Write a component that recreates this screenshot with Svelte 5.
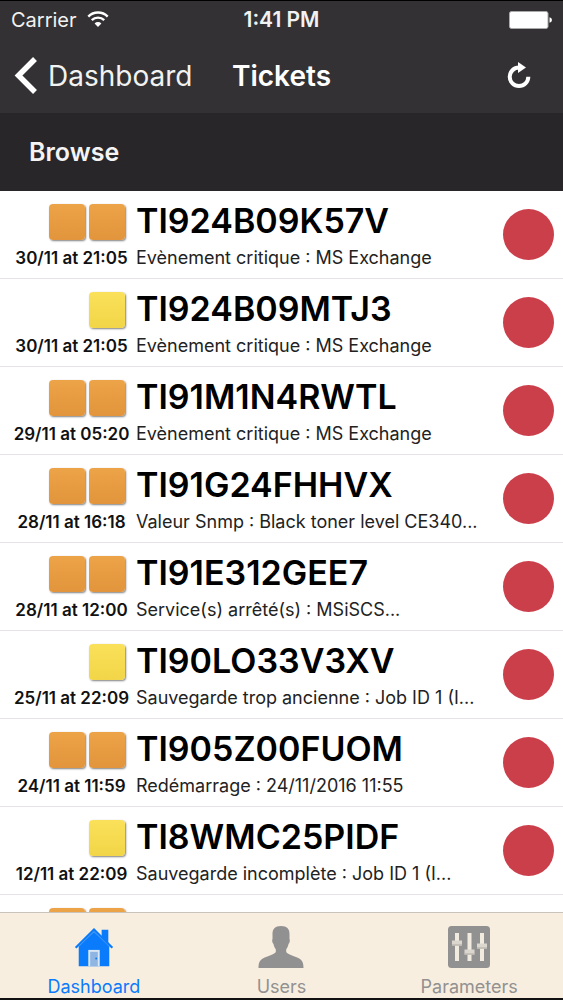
<script>
  const tickets = [
    { id: 'TI924B09K57V', date: '30/11 at 21:05', text: 'Evènement critique : MS Exchange', level: 2 },
    { id: 'TI924B09MTJ3', date: '30/11 at 21:05', text: 'Evènement critique : MS Exchange', level: 1 },
    { id: 'TI91M1N4RWTL', date: '29/11 at 05:20', text: 'Evènement critique : MS Exchange', level: 2 },
    { id: 'TI91G24FHHVX', date: '28/11 at 16:18', text: 'Valeur Snmp : Black toner level CE340...', level: 2 },
    { id: 'TI91E312GEE7', date: '28/11 at 12:00', text: 'Service(s) arrêté(s) : MSiSCS...', level: 2 },
    { id: 'TI90LO33V3XV', date: '25/11 at 22:09', text: 'Sauvegarde trop ancienne : Job ID 1 (I...', level: 1 },
    { id: 'TI905Z00FUOM', date: '24/11 at 11:59', text: 'Redémarrage : 24/11/2016 11:55', level: 2 },
    { id: 'TI8WMC25PIDF', date: '12/11 at 22:09', text: 'Sauvegarde incomplète : Job ID 1 (I...', level: 1 },
    { id: 'TI80IOS4VVRO', date: '', text: '', level: 2 }
  ]

  let tab = $state('Dashboard')
</script>

<div class="screen">
  <div class="status">
    <div class="carrier">
      <span>Carrier</span>
      <svg width="22" height="17" viewBox="0 0 22 17" fill="none" stroke="#fff" stroke-width="2.4">
        <path d="M1.3 5.6a13.6 13.6 0 0 1 19.4 0" />
        <path d="M4.8 9.2a8.7 8.7 0 0 1 12.4 0" />
        <path d="M11 16l-3.4-3.5a4.8 4.8 0 0 1 6.8 0z" fill="#fff" stroke="none" />
      </svg>
    </div>
    <span class="time">1:41 PM</span>
    <svg class="battery" width="43" height="18" viewBox="0 0 43 18" fill="#fff">
      <rect x="0.5" y="0.5" width="38.5" height="17" rx="2" stroke="#aaa" />
      <path d="M40.500 6.200c1.600.4 2.400 1.500 2.400 2.800s-.8 2.400-2.400 2.800z" />
    </svg>
  </div>

  <header>
    <a class="back" href="#dashboard">
      <svg width="24" height="37" viewBox="0 0 24 37" fill="none" stroke="#fff" stroke-width="5.5">
        <path d="M21 2L4.500 18.500 21 35" />
      </svg>
      Dashboard
    </a>
    <h1>Tickets</h1>
    <button class="refresh" aria-label="Refresh">
      <svg width="24" height="27" viewBox="0 0 24 27">
        <path d="M12 5.500a9.300 9.300 0 1 0 9.300 9.300" fill="none" stroke="#fff" stroke-width="4" />
        <path d="M11 0l8 5.500-8 5.500z" fill="#fff" />
      </svg>
    </button>
  </header>

  <h2>Browse</h2>

  <ul>
    {#each tickets as ticket}
      <li>
        <div class="meta">
          <div class="levels">
            {#each Array(ticket.level) as _}
              <span class="level" class:high={ticket.level > 1}></span>
            {/each}
          </div>
          <span class="date">{ticket.date}</span>
        </div>
        <div class="info">
          <h3>{ticket.id}</h3>
          <p>{ticket.text}</p>
        </div>
        <span class="dot"></span>
      </li>
    {/each}
  </ul>

  <nav>
    <button class:active={tab === 'Dashboard'} onclick={() => { tab = 'Dashboard' }}>
      <svg width="42" height="44" viewBox="0 0 44 44" fill="currentColor">
        <path d="M30 12V3h7v17z" />
        <path d="M22 1L2 21l1.500 1.500L22 5l18.500 17.500L42 21z" />
        <path d="M22 5L6 20v21h32V20z" />
        <path d="M5 21.500L22 4.500l17 17" fill="none" stroke="#5fa8f8" stroke-width="0.6" />
        <path d="M16 24h12v17H16z" fill="#d9e7f3" />
        <path d="M18 26h8v15h-8z" fill="#8fb5e2" />
        <circle cx="24.300" cy="33" r="1" />
      </svg>
      Dashboard
    </button>
    <button class:active={tab === 'Users'} onclick={() => { tab = 'Users' }}>
      <svg width="46" height="44" viewBox="0 0 46 44" fill="currentColor">
        <path d="M23 0c-6 0-8.800 3-8.500 9v4c-.8.800-.2 4 1 5 .5 2.500 1.200 4 2.300 5.200V26c-1.800 2.500-7.800 4-13 6.500C1.500 34.500.5 37 .5 42h45c0-5-1-7.500-4.300-9.500-5.200-2.500-11.200-4-13-6.500v-2.800c1.100-1.200 1.800-2.700 2.300-5.200 1.200-1 1.800-4.200 1-5V9c.3-6-2.500-9-8.500-9z" />
      </svg>
      Users
    </button>
    <button class:active={tab === 'Parameters'} onclick={() => { tab = 'Parameters' }}>
      <svg width="44" height="44" viewBox="0 0 44 44">
        <rect x="1" y="0" width="42" height="42" rx="3.5" fill="currentColor" />
        <path d="M10 7v28M22.500 7v28M35 7v28" stroke="#f0eadf" stroke-width="4" />
        <path d="M5 17h10M17.500 26h10M30 20h10" stroke="#dcd7ce" stroke-width="5" />
        <path d="M5 19h10M17.500 28h10M30 22h10" stroke="#bdb9b2" stroke-width="1.5" />
      </svg>
      Parameters
    </button>
  </nav>
</div>

<style>
  :global(body) {
    background: #fff;
  }

  .screen {
    display: flex;
    flex-direction: column;
    height: 100vh;
    box-sizing: border-box;
    border-top: 1px solid #000;
    border-bottom: 2px solid #111;
    font-family: Inter, "Liberation Sans", sans-serif;
    color: #000;
  }

  .status {
    display: grid;
    grid-template-columns: 1fr auto 1fr;
    align-items: center;
    height: 37px;
    padding: 0 11px;
    background: #333133;
    color: #f2f2f2;
    font-size: 20px;
  }

  .carrier {
    display: flex;
    align-items: center;
    gap: 10px;
  }

  .time {
    font-size: 21px;
    font-weight: 600;
  }

  .battery {
    justify-self: end;
  }

  header {
    display: grid;
    grid-template-columns: 1fr auto 1fr;
    align-items: center;
    height: 75px;
    padding: 0 14px;
    background: #333133;
  }

  .back {
    display: flex;
    align-items: center;
    gap: 10px;
    color: #f2f2f2;
    font-size: 28px;
    text-decoration: none;
  }

  h1, h2, h3, p, ul {
    margin: 0;
    padding: 0;
  }

  h1 {
    color: #fff;
    font-size: 28px;
    font-weight: 600;
  }

  button {
    border: none;
    padding: 0;
    background: transparent;
    font: inherit;
  }

  .refresh {
    display: flex;
    justify-self: end;
    padding-right: 18px;
  }

  h2 {
    padding: 0 29px;
    background: #282629;
    color: #f4f4f4;
    font-size: 25px;
    font-weight: 600;
    line-height: 78px;
  }

  ul {
    flex: 1;
    min-height: 0;
    overflow-y: auto;
    scrollbar-width: none;
    list-style: none;
  }

  li {
    display: flex;
    align-items: center;
    gap: 7px;
    height: 88px;
    box-sizing: border-box;
    padding: 0 9px 0 14px;
    border-bottom: 1px solid #e4e2e4;
  }

  .meta, .info {
    display: flex;
    flex-direction: column;
    gap: 4px;
  }

  .meta {
    align-items: center;
    flex: none;
    width: 115px;
  }

  .levels {
    display: flex;
    align-self: flex-end;
    gap: 4px;
    height: 42px;
    padding: 4px 4px 0 0;
    box-sizing: border-box;
  }

  .level {
    width: 36px;
    height: 36px;
    border-radius: 4px;
    background: linear-gradient(#fae15a, #f2d548);
    box-shadow: 1px 1px 2px rgba(0, 0, 0, 0.5);
  }

  .level.high {
    background: linear-gradient(#eda347, #e2953c);
  }

  .date {
    height: 24px;
    color: #111;
    font-size: 17px;
    font-weight: 600;
    line-height: 24px;
    white-space: nowrap;
  }

  .info {
    flex: 1;
    min-width: 0;
  }

  h3 {
    font-size: 34px;
    font-weight: 600;
    line-height: 42px;
    white-space: nowrap;
  }

  p {
    height: 24px;
    overflow: hidden;
    color: #222;
    font-size: 18px;
    line-height: 24px;
    text-overflow: ellipsis;
    white-space: nowrap;
  }

  .dot {
    flex: none;
    width: 51px;
    height: 51px;
    border-radius: 50%;
    background: #cb3f4b;
  }

  nav {
    display: grid;
    grid-template-columns: repeat(3, 1fr);
    height: 86px;
    box-sizing: border-box;
    border-top: 1px solid #c9c4bb;
    background: #f8eedf;
  }

  nav button {
    display: flex;
    flex-direction: column;
    align-items: center;
    justify-content: flex-end;
    gap: 6px;
    color: #929191;
    font-size: 18px;
    line-height: 22px;
  }

  nav button.active {
    color: #0a7bfb;
  }
</style>
